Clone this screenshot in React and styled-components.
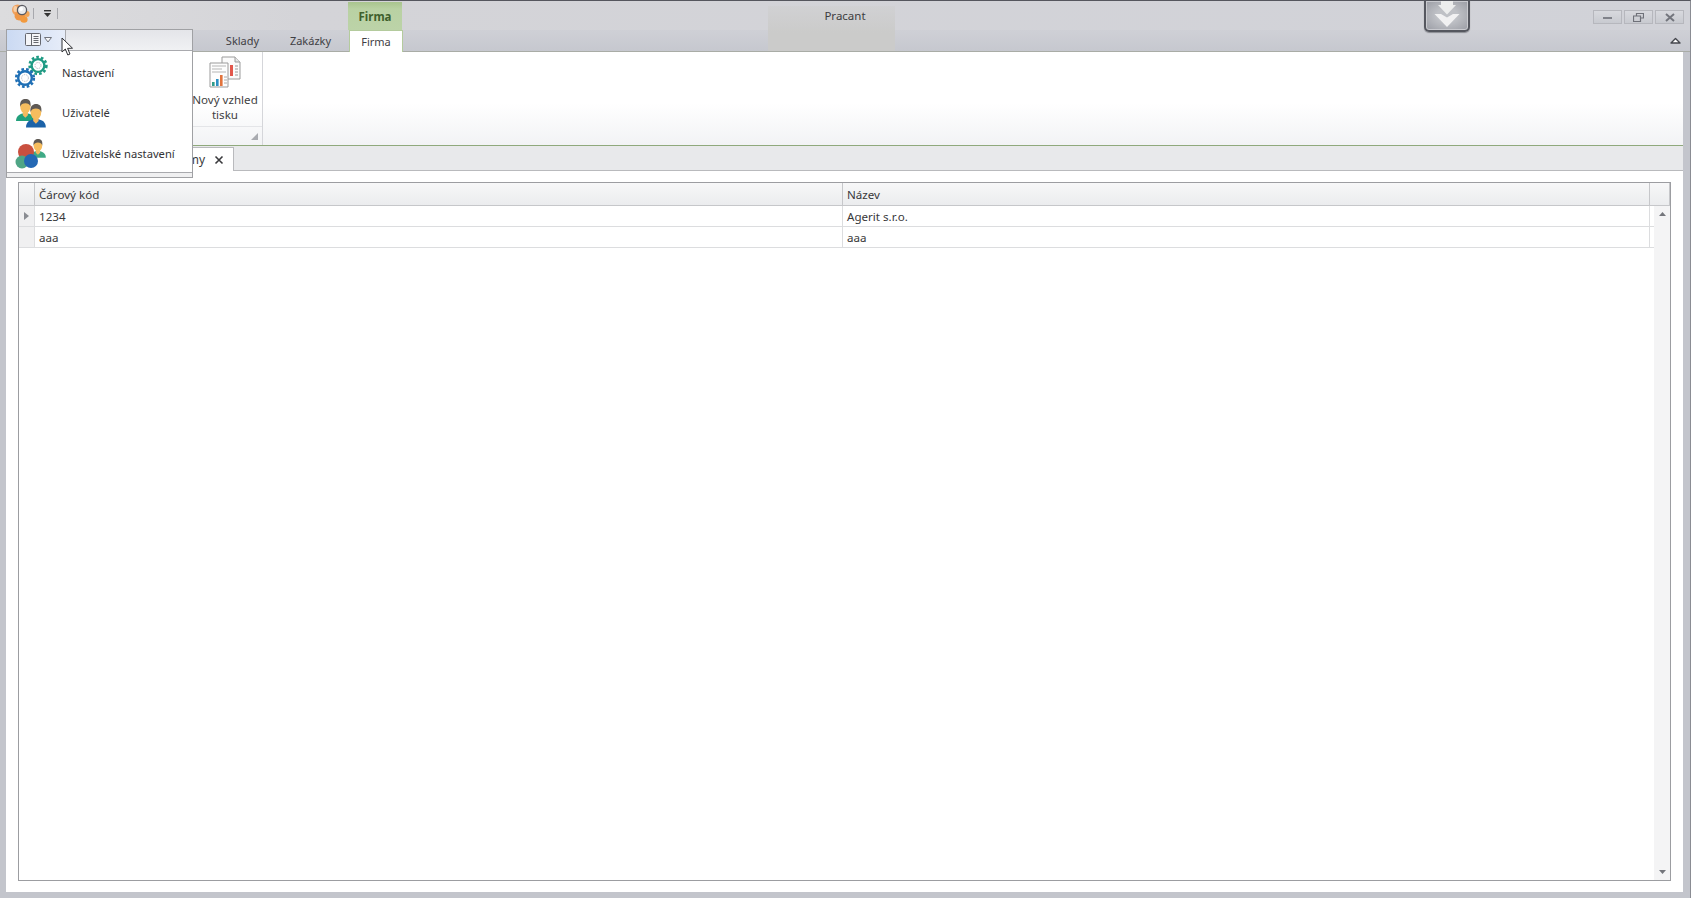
import React from 'react';
import styled, { createGlobalStyle } from 'styled-components';

const Global = createGlobalStyle`
  html, body { margin: 0; padding: 0; height: 100%; overflow: hidden; }
  body { font-family: "Noto Sans", "Open Sans", "Liberation Sans", sans-serif; font-size: 12px; color: #3b3b3b; }
  * { box-sizing: border-box; }
`;

const Window = styled.div`
  position: relative;
  width: 1691px;
  height: 898px;
  display: flex;
  flex-direction: column;
  background: #c3c5cc;
  border-top: 1px solid #55565e;
  border-right: 1px solid #8a8c93;
`;

const TitleBar = styled.div`
  height: 29px;
  display: grid;
  grid-template-columns: 1fr auto 1fr;
  background: linear-gradient(90deg, #dcdcde 0, #d4d4d8 300px, #d1d2d8 100%);
`;

const TitleLeft = styled.div`
  display: flex;
`;

const QuickAccess = styled.div`
  width: 348px;
  display: flex;
  align-items: center;
  padding: 0 0 5px 12px;
`;

const QuickDivider = styled.span`
  width: 1px;
  height: 11px;
  margin: ${p => p.$margin};
  background: #a7a8ad;
`;

const ContextTitle = styled.div`
  width: 54px;
  margin-top: 1px;
  display: flex;
  align-items: center;
  justify-content: center;
  background: linear-gradient(#a9c48e 0, #b9d1a3 25%, #bcd3a8 100%);
  color: #3f5f2c;
  font-weight: 700;
  font-size: 11.5px;
`;

const Title = styled.div`
  position: relative;
  display: flex;
  align-items: center;
  padding-bottom: 1px;
  font-size: 11.5px;
  color: #3d3d40;
`;

const TitleGlow = styled.div`
  position: absolute;
  left: 768px;
  top: 5px;
  width: 127px;
  height: 45px;
  background: linear-gradient(rgba(205, 205, 203, 0.35), #cbcbca 60%);
`;

const TitleRight = styled.div`
  display: flex;
  justify-content: flex-end;
  gap: 2px;
  padding: 9px 6px 0 0;
`;

const WinButton = styled.button`
  width: 29px;
  height: 14px;
  padding: 0;
  display: flex;
  align-items: center;
  justify-content: center;
  border: 1px solid #b6b7bd;
  background: linear-gradient(#d8d9de, #c8cad0);
`;

const TabRow = styled.div`
  height: 22px;
  display: flex;
  align-items: stretch;
  padding-left: 130px;
  background: linear-gradient(#cfd0d6, #c6c8cf);
  border-bottom: 1px solid #a9aca6;
`;

const Tab = styled.div`
  position: relative;
  display: flex;
  align-items: center;
  justify-content: center;
  width: ${p => p.$width}px;
  height: ${p => (p.$active ? 22 : 21)}px;
  padding-bottom: 1px;
  font-size: 11px;
  color: #3f4044;
  background: ${p => (p.$active ? '#ffffff' : 'transparent')};
  border: ${p => (p.$active ? '1px solid #b4cb9d' : 'none')};
  border-bottom: none;
  margin-left: ${p => p.$gap || 0}px;
`;

const Collapse = styled.div`
  margin-left: auto;
  width: 29px;
  display: flex;
  align-items: center;
  justify-content: center;
`;

const Body = styled.div`
  flex: 1;
  display: flex;
  flex-direction: column;
  padding: 0 7px 6px 6px;
  min-height: 0;
`;

const Ribbon = styled.div`
  height: 94px;
  display: flex;
  justify-content: flex-start;
  padding-left: 186px;
  background: linear-gradient(#ffffff 0, #ffffff 55%, #f2f3f5 100%);
  border-bottom: 1px solid #8fa97c;
`;

const RibbonGroup = styled.div`
  width: 71px;
  display: flex;
  flex-direction: column;
  border-right: 1px solid #d5d6da;
`;

const RibbonButton = styled.div`
  flex: 1;
  display: flex;
  flex-direction: column;
  align-items: center;
  padding: 4px 4px 0 0;
  text-align: center;
  line-height: 15px;
  font-size: 11.6px;
  color: #3f3f42;
`;

const RibbonLabel = styled.span`
  margin-top: 4px;
`;

const GroupFooter = styled.div`
  height: 19px;
  display: flex;
  align-items: center;
  justify-content: flex-end;
  padding-right: 4px;
  border-top: 1px solid #e4e5e8;
`;

const DocStrip = styled.div`
  height: 25px;
  flex: none;
  padding: 1px 0 0 2px;
  background: #e8e9eb;
  border-bottom: 1px solid #b9babd;
`;

const DocTab = styled.div`
  width: 226px;
  height: 24px;
  display: flex;
  align-items: center;
  justify-content: flex-end;
  gap: 9px;
  padding: 0 9px 0 0;
  background: #ffffff;
  border: 1px solid #b9babd;
  border-bottom: none;
  font-size: 12px;
`;

const Content = styled.div`
  flex: 1;
  min-height: 0;
  padding: 11px 12px 11px 12px;
  background: #ffffff;
`;

const Grid = styled.div`
  position: relative;
  height: 100%;
  border: 1px solid #9c9da1;
  background: #ffffff;
`;

const GridRow = styled.div`
  display: grid;
  grid-template-columns: 16px 808px 1fr 20px;
  height: ${p => p.$h}px;
  border-bottom: 1px solid ${p => (p.$head ? '#c6c7ca' : '#dcdddf')};
  background: ${p => (p.$head ? 'linear-gradient(#f7f7f8, #ebecee)' : 'transparent')};
`;

const Cell = styled.div`
  display: flex;
  align-items: center;
  padding-left: 4px;
  font-size: 11.6px;
  color: #38383a;
  border-right: 1px solid ${p => (p.$head ? '#c6c7ca' : '#dcdddf')};
`;

const RowHead = styled(Cell)`
  padding: 0;
  justify-content: center;
  background: ${p => (p.$head ? 'transparent' : '#f0f0f1')};
`;

const ScrollBar = styled.div`
  position: absolute;
  top: 23px;
  right: 0;
  bottom: 0;
  width: 16px;
  display: flex;
  flex-direction: column;
  justify-content: space-between;
  align-items: center;
  padding: 6px 0;
  background: #f4f4f5;
`;

const Menu = styled.div`
  position: absolute;
  left: 6px;
  top: 28px;
  width: 187px;
  height: 149px;
  display: flex;
  flex-direction: column;
  background: #ffffff;
  border: 1px solid #a0a1a4;
`;

const MenuHead = styled.div`
  height: 21px;
  display: flex;
  background: linear-gradient(#e4e5e9, #f0f1f3);
  border-bottom: 1px solid #a9aaae;
`;

const MenuToggle = styled.div`
  width: 59px;
  display: flex;
  align-items: center;
  justify-content: center;
  gap: 3px;
  padding-left: 4px;
  background: linear-gradient(90deg, #cbdaf3, #e7edf9);
  border-right: 1px solid #a9aaae;
`;

const MenuList = styled.div`
  flex: 1;
`;

const MenuItem = styled.div`
  height: 40.5px;
  display: flex;
  align-items: center;
  gap: 14px;
  padding-left: 7px;
  font-size: 11.2px;
  color: #333336;
`;

const MenuLabel = styled.span`
  padding-top: 3px;
`;

const IconBox = styled.span`
  width: 34px;
  height: 34px;
  flex: none;
  display: block;
  svg { display: block; }
`;

const MenuFooter = styled.div`
  height: 5px;
  background: #f0f0f1;
  border-top: 1px solid #a9aaae;
`;

const Pointer = styled.svg`
  position: absolute;
  left: 61px;
  top: 36px;
`;

const DropWidget = styled.div`
  position: absolute;
  left: 1424px;
  top: -2px;
  width: 46px;
  height: 33px;
  display: flex;
  justify-content: center;
  border: 2px solid #55575f;
  border-radius: 0 0 5px 5px;
  background: radial-gradient(#bfc1c6 35%, #9a9ca4 100%);
  box-shadow: inset 0 0 0 1px #c9cacf, 0 1px 1px #8a8b92;
`;

const Logo = () => (
  <svg width="18" height="20" viewBox="0 0 18 20">
    <ellipse cx="5.5" cy="7" rx="5.5" ry="5.5" fill="#f0a260" />
    <ellipse cx="8" cy="13" rx="5.5" ry="4.6" fill="#ee9748" />
    <ellipse cx="12" cy="16.5" rx="3.6" ry="3.2" fill="#f29a3e" />
    <ellipse cx="15" cy="11" rx="2.6" ry="3" fill="#f2a556" />
    <ellipse cx="3.4" cy="6" rx="2" ry="3" fill="#f9cfa5" />
    <circle cx="10" cy="7" r="4.6" fill="#e9eaec" stroke="#5a5b62" strokeWidth="1.3" />
    <circle cx="9" cy="6" r="2" fill="#ffffff" />
  </svg>
);

const QuickArrow = () => (
  <svg width="9" height="9" viewBox="0 0 9 9">
    <rect x="1" y="1" width="7" height="1.4" fill="#333" />
    <path d="M1 4 H8 L4.5 8 Z" fill="#333" />
  </svg>
);

const Gear = ({ cx, cy, r, color }) => (
  <g>
    <circle cx={cx} cy={cy} r={r} fill="none" stroke={color} strokeWidth="2.6" strokeDasharray="2.6 2.1" />
    <circle cx={cx} cy={cy} r={r - 2} fill="none" stroke={color} strokeWidth="2.4" />
    <circle cx={cx} cy={cy} r={r - 4} fill="#ffffff" />
    <circle cx={cx} cy={cy} r={r - 5.4} fill="none" stroke="#b9bcc4" strokeWidth="1" strokeDasharray="1.4 1" />
  </g>
);

const GearsIcon = () => (
  <svg width="34" height="34" viewBox="0 0 34 34">
    <Gear cx={24} cy={11.5} r={8.4} color="#1e9a83" />
    <Gear cx={11} cy={24} r={8.8} color="#1f6fb5" />
  </svg>
);

const Person = ({ x, y, s, body }) => (
  <g transform={`translate(${x} ${y}) scale(${s})`}>
    <path d="M0 26 C0 20 4 18 8 17 L14 17 C18 18 22 20 22 26 Z" fill={body} />
    <path d="M8 15 H14 V19 L11 22 L8 19 Z" fill="#f4b860" />
    <ellipse cx="11" cy="9" rx="6" ry="8" fill="#f6bd5e" />
    <path d="M5 9 C4 2 8 0 11 0 C15 0 18 2 17 9 C16 6 14 5 11 5 C8 5 6 6 5 9 Z" fill="#5f5a55" />
  </g>
);

const UsersIcon = () => (
  <svg width="34" height="34" viewBox="0 0 34 34">
    <Person x={2} y={5} s={0.85} body="#22a07c" />
    <Person x={12} y={10} s={0.9} body="#1b62a8" />
  </svg>
);

const GroupsIcon = () => (
  <svg width="34" height="34" viewBox="0 0 34 34">
    <Person x={16} y={4} s={0.72} body="#3faa86" />
    <circle cx="12" cy="17" r="8" fill="#c9503f" />
    <circle cx="8" cy="27" r="6.5" fill="#4fa585" />
    <circle cx="17" cy="26" r="7" fill="#2468b4" />
  </svg>
);

const ReportIcon = () => (
  <svg width="32" height="32" viewBox="0 0 32 32">
    <path d="M13 1 H26 L31 6 V23 H13 Z" fill="#fbfbfb" stroke="#9b9b9b" />
    <path d="M26 1 V6 H31" fill="#e6e6e6" stroke="#9b9b9b" />
    <rect x="21" y="9" width="3" height="11" fill="#e2574c" />
    <path d="M26 10 H29 M26 13 H29 M26 16 H29 M26 19 H29" stroke="#999" />
    <path d="M1 7 H19 V31 H1 Z" fill="#fdfdfd" stroke="#9b9b9b" />
    <path d="M3 10 H17 M3 13 H13 M3 16 H17" stroke="#b5b5b5" />
    <rect x="3" y="26" width="2.6" height="4" fill="#2f9c8a" />
    <rect x="7" y="23" width="2.6" height="7" fill="#2a8fc4" />
    <rect x="11" y="19" width="2.6" height="11" fill="#e2733c" />
    <path d="M15 21 H18 M15 24 H18 M15 27 H18" stroke="#aaa" />
  </svg>
);

const PanelIcon = () => (
  <svg width="16" height="13" viewBox="0 0 16 13">
    <rect x="0.5" y="0.5" width="15" height="12" rx="1" fill="#f4f5f8" stroke="#65676e" />
    <path d="M6.5 1 V12" stroke="#65676e" />
    <path d="M8.5 3.5 H13.5 M8.5 5.5 H13.5 M8.5 7.5 H13.5 M8.5 9.5 H13.5" stroke="#65676e" />
  </svg>
);

const OpenArrow = () => (
  <svg width="8" height="6" viewBox="0 0 8 6">
    <path d="M0.5 0.5 H7.5 L4 5 Z" fill="#f4f5f8" stroke="#71747c" />
  </svg>
);

const App = () => (
  <Window>
    <Global />
    <TitleGlow />
    <TitleBar>
      <TitleLeft>
        <QuickAccess>
          <Logo />
          <QuickDivider $margin="0 9px 0 3px" />
          <QuickArrow />
          <QuickDivider $margin="0 0 0 5px" />
        </QuickAccess>
        <ContextTitle>Firma</ContextTitle>
      </TitleLeft>
      <Title>Pracant</Title>
      <TitleRight>
        <WinButton>
          <svg width="9" height="3"><rect width="9" height="2" y="1" fill="#80828a" /></svg>
        </WinButton>
        <WinButton>
          <svg width="11" height="9" viewBox="0 0 11 9">
            <path d="M3.5 2.5 V0.5 H10.5 V5 H7.5 M0.5 3 H7.5 V8.5 H0.5 Z" fill="none" stroke="#6f7179" strokeWidth="1.2" />
          </svg>
        </WinButton>
        <WinButton>
          <svg width="10" height="9" viewBox="0 0 10 9">
            <path d="M1 1 L9 8 M9 1 L1 8" stroke="#73757d" strokeWidth="2" />
          </svg>
        </WinButton>
      </TitleRight>
    </TitleBar>
    <TabRow>
      <Tab $width={75}>Evidence</Tab>
      <Tab $width={64} $gap={5.5}>Sklady</Tab>
      <Tab $width={72}>Zakázky</Tab>
      <Tab $width={54} $gap={2.5} $active>Firma</Tab>
      <Collapse>
        <svg width="11" height="8" viewBox="0 0 11 8">
          <path d="M1 6 L5.5 1.5 L10 6 Z" fill="#ffffff" stroke="#45474d" strokeWidth="1.4" strokeLinejoin="round" />
        </svg>
      </Collapse>
    </TabRow>
    <Body>
      <Ribbon>
        <RibbonGroup>
          <RibbonButton>
            <ReportIcon />
            <RibbonLabel>Nový vzhled<br />tisku</RibbonLabel>
          </RibbonButton>
          <GroupFooter>
            <svg width="7" height="7" viewBox="0 0 7 7"><path d="M7 0 V7 H0 Z" fill="#a9abb0" /></svg>
          </GroupFooter>
        </RibbonGroup>
      </Ribbon>
      <DocStrip>
        <DocTab>
          <span>Firmy</span>
          <svg width="10" height="10" viewBox="0 0 10 10">
            <path d="M1.5 1.5 L8.5 8.5 M8.5 1.5 L1.5 8.5" stroke="#3a3a3d" strokeWidth="1.6" />
          </svg>
        </DocTab>
      </DocStrip>
      <Content>
        <Grid>
          <GridRow $head $h={23}>
            <RowHead $head />
            <Cell $head>Čárový kód</Cell>
            <Cell $head>Název</Cell>
            <Cell $head />
          </GridRow>
          <GridRow $h={21}>
            <RowHead>
              <svg width="5" height="8" viewBox="0 0 5 8"><path d="M0 0 L5 4 L0 8 Z" fill="#8a8c92" /></svg>
            </RowHead>
            <Cell>1234</Cell>
            <Cell>Agerit s.r.o.</Cell>
          </GridRow>
          <GridRow $h={21}>
            <RowHead />
            <Cell>aaa</Cell>
            <Cell>aaa</Cell>
          </GridRow>
          <ScrollBar>
            <svg width="7" height="4" viewBox="0 0 7 4"><path d="M0 4 L3.5 0 L7 4 Z" fill="#74767c" /></svg>
            <svg width="7" height="4" viewBox="0 0 7 4"><path d="M0 0 H7 L3.5 4 Z" fill="#74767c" /></svg>
          </ScrollBar>
        </Grid>
      </Content>
    </Body>
    <Menu>
      <MenuHead>
        <MenuToggle>
          <PanelIcon />
          <OpenArrow />
        </MenuToggle>
      </MenuHead>
      <MenuList>
        <MenuItem><IconBox><GearsIcon /></IconBox><MenuLabel>Nastavení</MenuLabel></MenuItem>
        <MenuItem><IconBox><UsersIcon /></IconBox><MenuLabel>Uživatelé</MenuLabel></MenuItem>
        <MenuItem><IconBox><GroupsIcon /></IconBox><MenuLabel>Uživatelské nastavení</MenuLabel></MenuItem>
      </MenuList>
      <MenuFooter />
    </Menu>
    <Pointer width="13" height="19" viewBox="0 0 13 19">
      <path d="M1 1 V15 L4.3 12 L6.8 18 L9 17 L6.6 11.4 L11.5 11.2 Z" fill="#ffffff" stroke="#2f3034" strokeWidth="1" />
    </Pointer>
    <DropWidget>
      <svg width="28" height="27" viewBox="0 0 28 27">
        <path d="M8 0 H20 V4 H23 L14 13.5 L5 4 H8 Z" fill="#eceded" />
        <path d="M1.5 13 H8 L14 16.5 L20 13 H26.5 L14 26 Z" fill="#f1f1f2" />
      </svg>
    </DropWidget>
  </Window>
);

export default App;
